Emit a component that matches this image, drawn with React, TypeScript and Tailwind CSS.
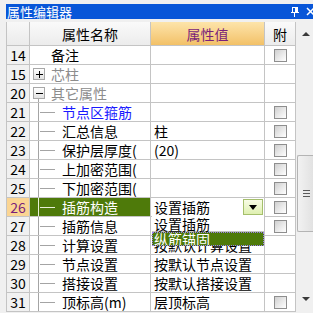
const FONT = { fontFamily: '"Noto Sans CJK SC", "Noto Sans", sans-serif' }

type Row = {
  n: number
  name: string
  value?: string
  kind: 'top' | 'plus' | 'minus' | 'child'
  color?: string
  check?: boolean
  selected?: boolean
}

// row 27's value is hidden under the open dropdown list
const rows: Row[] = [
  { n: 14, name: '备注', kind: 'top', check: true },
  { n: 15, name: '芯柱', kind: 'plus', color: 'text-[#8c8c8c]' },
  { n: 20, name: '其它属性', kind: 'minus', color: 'text-[#8c8c8c]' },
  { n: 21, name: '节点区箍筋', kind: 'child', color: 'text-[#1a1aff]', check: true },
  { n: 22, name: '汇总信息', value: '柱', kind: 'child', check: true },
  { n: 23, name: '保护层厚度(', value: '(20)', kind: 'child', check: true },
  { n: 24, name: '上加密范围(', kind: 'child', check: true },
  { n: 25, name: '下加密范围(', kind: 'child', check: true },
  { n: 26, name: '插筋构造', value: '设置插筋', kind: 'child', check: true, selected: true },
  { n: 27, name: '插筋信息', kind: 'child', check: true },
  { n: 28, name: '计算设置', value: '按默认计算设置', kind: 'child' },
  { n: 29, name: '节点设置', value: '按默认节点设置', kind: 'child' },
  { n: 30, name: '搭接设置', value: '按默认搭接设置', kind: 'child' },
  { n: 31, name: '顶标高(m)', value: '层顶标高', kind: 'child', check: true },
]

function Checkbox() {
  return (
    <div className="h-[13px] w-[13px] border border-[#8e8e8e] bg-gradient-to-br from-[#cfcfcf] via-[#e8e8e8] to-white" />
  )
}

function ToggleBox({ open }: { open: boolean }) {
  return (
    <div className="flex h-[12px] w-[12px] items-center justify-center border border-[#a8a8a8] bg-gradient-to-b from-white to-[#e2e2e2]">
      <div className="relative h-[7px] w-[7px]">
        <div className="absolute left-0 top-[3px] h-px w-[7px] bg-black" />
        {!open && <div className="absolute left-[3px] top-0 h-[7px] w-px bg-black" />}
      </div>
    </div>
  )
}

function NameCell({ row }: { row: Row }) {
  const line = row.selected ? 'bg-[#e8f0d8]' : 'bg-[#a4a4a4]'
  return (
    <div
      className={`relative flex h-full w-[121px] shrink-0 items-center border-r border-[#c4c4c4] ${
        row.selected ? 'bg-[#4e7a0a]' : 'bg-white'
      }`}
    >
      {row.kind === 'plus' || row.kind === 'minus' ? (
        <div className="absolute left-[3px] top-[3px]">
          <ToggleBox open={row.kind === 'minus'} />
        </div>
      ) : null}
      {row.kind === 'minus' ? (
        <div className="absolute bottom-0 left-[8px] top-[15px] w-px bg-[#a4a4a4]" />
      ) : null}
      {row.kind === 'child' ? (
        <>
          <div className={`absolute bottom-0 left-[8px] top-0 w-px ${line}`} />
          <div className={`absolute left-[10px] top-[9px] h-px w-[15px] ${line}`} />
        </>
      ) : null}
      <span
        className={`whitespace-nowrap text-[14px] leading-none ${
          row.kind === 'child' ? 'pl-[32px]' : 'pl-[21px]'
        } ${row.selected ? 'text-white' : row.color ?? 'text-black'}`}
      >
        {row.name}
      </span>
    </div>
  )
}

function GridRow({ row }: { row: Row }) {
  return (
    <div className="flex h-[19px] border-b border-[#c4c4c4]">
      <div
        className={`flex h-full w-[23px] shrink-0 items-center justify-center border-r border-[#c4c4c4] text-[14px] leading-none ${
          row.selected ? 'bg-[#fbd593] text-[#7a1f7a]' : 'bg-[#f1f1f1] text-black'
        }`}
      >
        {row.n}
      </div>
      <NameCell row={row} />
      <div className="relative flex h-full w-[114px] shrink-0 items-center overflow-hidden border-r border-[#c4c4c4] bg-white pl-[3px]">
        <span className="whitespace-nowrap text-[14px] leading-none text-black">{row.value}</span>
        {row.selected ? (
          <div className="absolute right-[1px] top-[1px] flex h-[16px] w-[20px] items-center justify-center border border-[#a5bf6c] bg-gradient-to-b from-[#f8fce6] to-[#dff0b0]">
            <div className="h-0 w-0 border-x-[4px] border-t-[5px] border-x-transparent border-t-black" />
          </div>
        ) : null}
      </div>
      <div className="flex h-full w-[31px] shrink-0 items-center justify-center border-r border-[#c4c4c4] bg-white">
        {row.check ? <Checkbox /> : null}
      </div>
    </div>
  )
}

function Scrollbar() {
  return (
    <div className="flex w-[17px] flex-col bg-[#f0f0f0]">
      <div className="flex h-[24px] items-end justify-center pb-[10px] pl-[2px]">
        <div className="h-0 w-0 border-x-[4px] border-b-[4px] border-x-transparent border-b-[#3a3a3a]" />
      </div>
      <div className="h-[109px]" />
      <div className="ml-[1px] flex h-[77px] flex-col items-center justify-center gap-[2px] rounded-l-[2px] border border-r-0 border-[#b4b4b4] bg-gradient-to-r from-[#f2f2f2] to-[#e2e2e2] pl-[2px]">
        <div className="h-px w-[7px] bg-[#5a5a5a]" />
        <div className="h-px w-[7px] bg-[#5a5a5a]" />
        <div className="h-px w-[7px] bg-[#5a5a5a]" />
      </div>
      <div className="flex flex-1 items-end justify-center pb-[11px] pl-[2px]">
        <div className="h-0 w-0 border-x-[4px] border-t-[4px] border-x-transparent border-t-[#3a3a3a]" />
      </div>
    </div>
  )
}

export default function App() {
  return (
    <div className="relative h-[313px] w-[313px] overflow-hidden bg-[#f0f0f0]" style={FONT}>
      <div className="ml-[6px] mt-[4px] flex h-[15px] items-center bg-[#0856d8] pl-[1px]">
        <span className="flex-1 whitespace-nowrap text-[13px] leading-none text-white">属性编辑器</span>
        <svg width="10" height="10" viewBox="0 0 10 10" className="mr-[6px]">
          <rect x="2.5" y="0.5" width="5" height="5" fill="none" stroke="white" />
          <rect x="5" y="1" width="2" height="4" fill="white" />
          <rect x="1" y="5" width="8" height="1" fill="white" />
          <rect x="4" y="6" width="1" height="4" fill="white" />
        </svg>
        <svg width="9" height="9" viewBox="0 0 9 9" className="mr-[-2px]">
          <path d="M1 1 L8 8 M8 1 L1 8" stroke="white" strokeWidth="1.5" />
        </svg>
      </div>
      <div className="mt-[3px] flex pl-[6px]">
        <div className="relative border-l border-[#c4c4c4]">
          <div className="flex h-[24px] border-b border-[#c4c4c4] text-[14px] leading-none">
            <div className="w-[23px] border-r border-[#c4c4c4] bg-gradient-to-b from-[#f8f8f8] to-[#ebebeb]" />
            <div className="flex w-[121px] items-center justify-center border-r border-[#c4c4c4] bg-gradient-to-b from-[#fafafa] to-[#ececec] text-black">
              属性名称
            </div>
            <div className="flex w-[114px] items-center justify-center border-r border-[#c4c4c4] bg-gradient-to-b from-[#fde4aa] to-[#f2c167] text-[#7a1f7a]">
              属性值
            </div>
            <div className="flex w-[31px] items-center justify-center border-r border-[#c4c4c4] bg-gradient-to-b from-[#fafafa] to-[#ececec] text-black">
              附
            </div>
          </div>
          {rows.map((r) => (
            <GridRow key={r.n} row={r} />
          ))}
          <div className="absolute left-[145px] top-[194px] w-[112px] bg-white text-[14px] leading-none">
            <div className="flex h-[16px] items-center border-b border-[#c4c4c4] pl-[2px] text-black">设置插筋</div>
            <div className="flex h-[14px] items-center overflow-hidden border border-dotted border-[#9b7cf2] bg-[#4e7a0a] pl-[1px] text-white">
              纵筋锚固
            </div>
          </div>
        </div>
        <Scrollbar />
      </div>
    </div>
  )
}
